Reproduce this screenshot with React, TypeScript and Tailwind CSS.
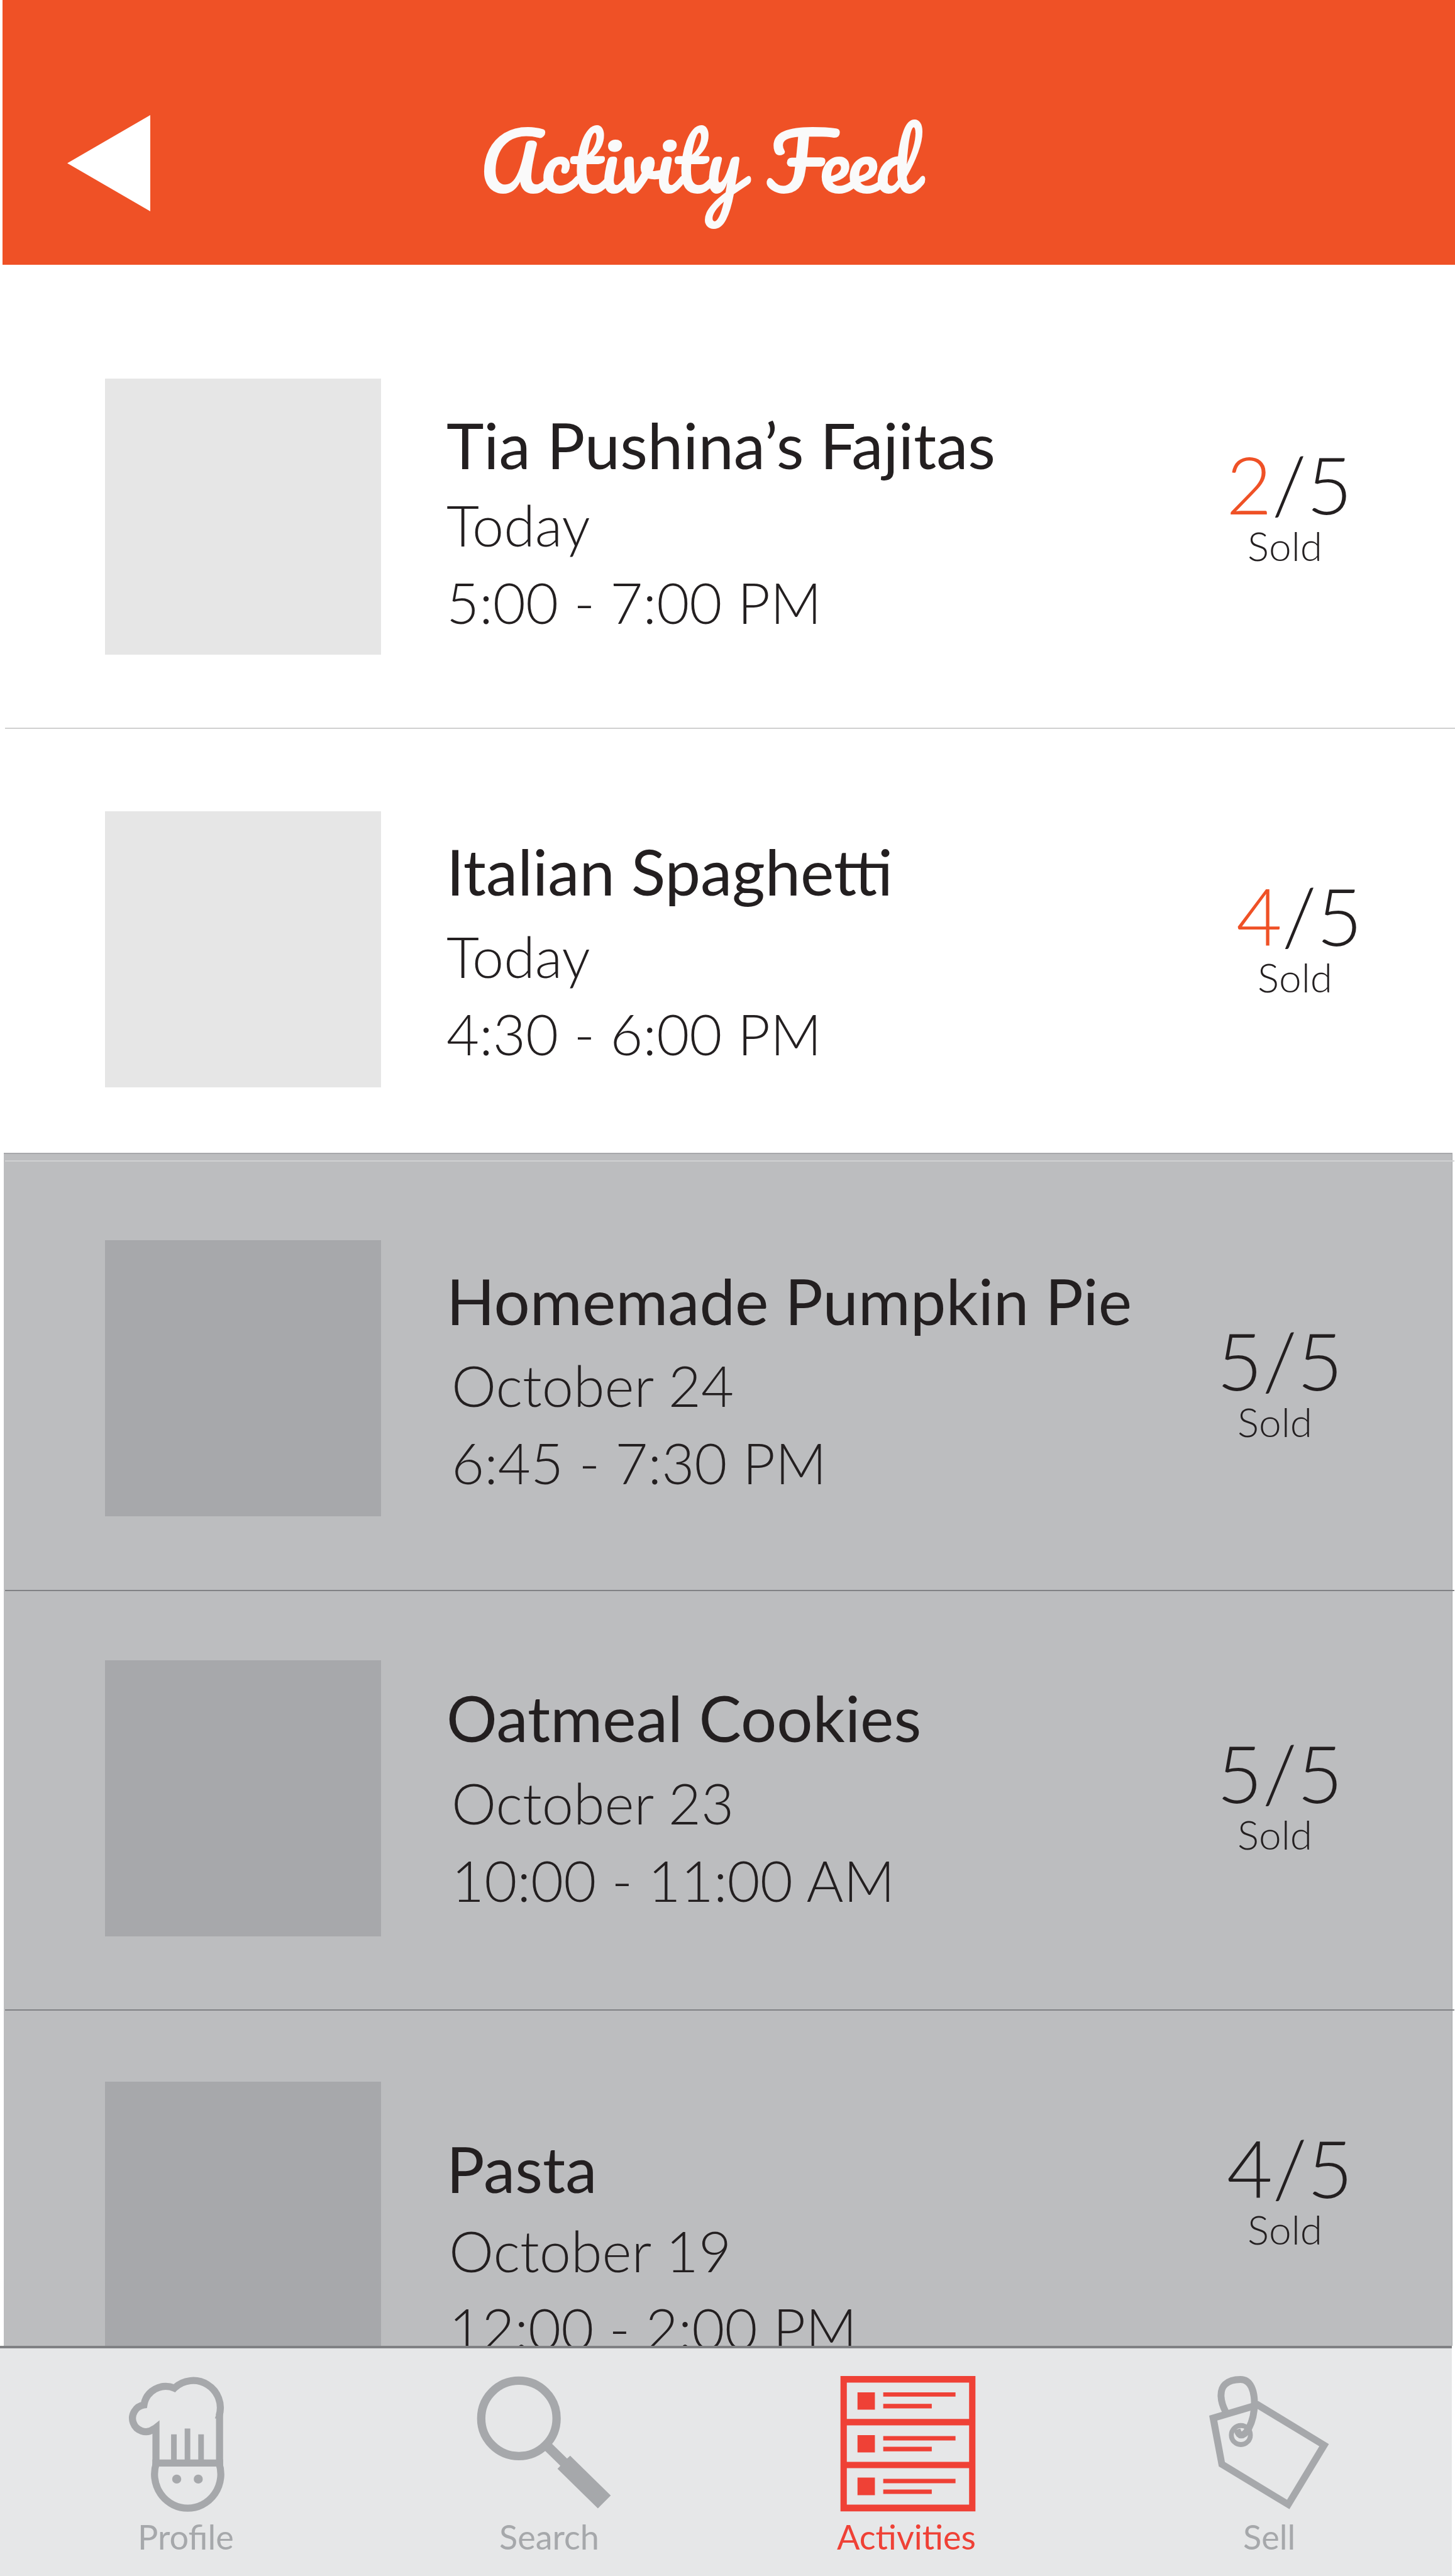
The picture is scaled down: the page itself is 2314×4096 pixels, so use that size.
import type { ReactNode } from "react";

type Activity = {
  title: string;
  date: string;
  time: string;
  sold: string;
  total: string;
  row: string;
  thumb: string;
  text: string;
  when: string;
  count: string;
  fraction: string;
  soldColor: string;
  label: string;
};

const upcoming: Activity[] = [
  {
    title: "Tia Pushina’s Fajitas",
    date: "Today",
    time: "5:00 - 7:00 PM",
    sold: "2",
    total: "5",
    row: "h-[736px]",
    thumb: "mt-[181px] bg-[#e6e6e6]",
    text: "pt-[225px]",
    when: "pt-1",
    count: "pt-[287px]",
    fraction: "pl-5",
    soldColor: "text-[#ef5126]",
    label: "pl-[54px]",
  },
  {
    title: "Italian Spaghetti",
    date: "Today",
    time: "4:30 - 6:00 PM",
    sold: "4",
    total: "5",
    row: "h-[674px]",
    thumb: "mt-[131px] bg-[#e6e6e6]",
    text: "pt-[165px]",
    when: "pt-3",
    count: "pt-[235px]",
    fraction: "pl-9",
    soldColor: "text-[#ef5126]",
    label: "pl-[70px]",
  },
];

const past: Activity[] = [
  {
    title: "Homemade Pumpkin Pie",
    date: "October 24",
    time: "6:45 - 7:30 PM",
    sold: "5",
    total: "5",
    row: "h-[681px]",
    thumb: "mt-[125px] bg-[#a7a8ab]",
    text: "pt-[160px]",
    when: "pt-[11px] pl-2",
    count: "pt-[254px]",
    fraction: "pl-[5px]",
    soldColor: "",
    label: "pl-[38px]",
  },
  {
    title: "Oatmeal Cookies",
    date: "October 23",
    time: "10:00 - 11:00 AM",
    sold: "5",
    total: "5",
    row: "h-[665px]",
    thumb: "mt-[110px] bg-[#a7a8ab]",
    text: "pt-[140px]",
    when: "pt-3 pl-2",
    count: "pt-[227px]",
    fraction: "pl-[5px]",
    soldColor: "",
    label: "pl-[38px]",
  },
  {
    title: "Pasta",
    date: "October 19",
    time: "12:00 - 2:00 PM",
    sold: "4",
    total: "5",
    row: "h-[534px]",
    thumb: "mt-[113px] bg-[#a7a8ab]",
    text: "pt-[190px]",
    when: "pt-[7px] pl-1",
    count: "pt-[188px]",
    fraction: "pl-[21px]",
    soldColor: "",
    label: "pl-[54px]",
  },
];

function ActivityRow({ a }: { a: Activity }) {
  return (
    <article className={`flex items-start overflow-hidden ${a.row}`}>
      <div className={`ml-[161px] size-[439px] shrink-0 ${a.thumb}`} />
      <div className={`ml-[104px] w-[1220px] shrink-0 whitespace-nowrap ${a.text}`}>
        <h2 className="text-[101px] leading-[123px] font-normal">{a.title}</h2>
        <div className={`text-[90px] leading-[123px] font-light ${a.when}`}>
          <p>{a.date}</p>
          <p>{a.time}</p>
        </div>
      </div>
      <div className={`whitespace-nowrap font-light ${a.count}`}>
        <p className={`text-[126px] leading-[124px] ${a.fraction}`}>
          <span className={a.soldColor}>{a.sold}</span>/{a.total}
        </p>
        <p className={`pt-1 text-[64px] leading-[64px] ${a.label}`}>Sold</p>
      </div>
    </article>
  );
}

function ProfileIcon() {
  return (
    <svg viewBox="0 60 780 840" className="h-[242px] w-[225px]" fill="currentColor">
      <g fill="none" stroke="currentColor" strokeWidth="39" strokeLinejoin="miter">
        <path d="M240 401A74 74 0 1 1 190 265A122 122 0 0 1 358 172A150 150 0 0 1 605 325" />
        <path d="M259 584A183 188 0 1 0 604 584" />
      </g>
      <path d="M226 385L242 377L276 350V605H237V422L226 424Z" />
      <path d="M588 320L627 310V605H588V339H582Z" />
      <path d="M237 566H627V605H237ZM340 427H371V570H340ZM415 395H446V570H415ZM490 427H521V570H490Z" />
      <circle cx="371" cy="674" r="25" />
      <circle cx="490" cy="674" r="25" />
    </svg>
  );
}

function SearchIcon() {
  return (
    <svg viewBox="0 0 840 840" className="size-[242px]" fill="currentColor">
      <circle cx="282" cy="279" r="208" fill="none" stroke="currentColor" strokeWidth="46" />
      <path d="M445 400L548 501L565 485L789 705L718 776L495 557L511 541L408 440Z" />
    </svg>
  );
}

function ActivitiesIcon() {
  return (
    <svg viewBox="0 0 900 840" className="h-[242px] w-[260px]" fill="currentColor">
      <path
        fillRule="evenodd"
        d="M74 45H819V792H74ZM109 82V282H784V82ZM109 318V519H784V318ZM109 554V755H784V554Z"
      />
      <path d="M168 135H264V231H168ZM168 371H264V467H168ZM168 606H264V703H168Z" />
      <path d="M310 135H709V159H310ZM310 377H709V401H310ZM310 613H709V637H310Z" />
      <path d="M310 199H578V224H310ZM310 436H578V461H310ZM310 672H578V696H310Z" />
    </svg>
  );
}

function SellIcon() {
  return (
    <svg viewBox="0 0 780 840" className="h-[242px] w-[225px]" fill="currentColor">
      <path
        fillRule="evenodd"
        d="M69 264L340 183L730 421L512 780L122 544ZM114 291L156 520L499 728L677 433L334 226Z"
      />
      <g fill="none" stroke="currentColor">
        <circle cx="244" cy="371" r="52.5" strokeWidth="27" />
        <path
          strokeWidth="38"
          d="M160 243C125 175 128 118 157 91C180 70 215 64 242 64C300 64 319 130 319 195C319 250 305 300 288 333C268 368 255 371 245 371C236 371 228 360 223 340"
        />
      </g>
      <path d="M242 333L262 336L248 350Z" fill="#e6e7e8" />
    </svg>
  );
}

function NavItem({
  icon,
  label,
  item,
  text,
}: {
  icon: ReactNode;
  label: string;
  item: string;
  text: string;
}) {
  return (
    <a className={`flex shrink-0 flex-col ${item}`}>
      {icon}
      <span className={`text-[54px] leading-[54px] whitespace-nowrap ${text}`}>{label}</span>
    </a>
  );
}

export default function App() {
  return (
    <div className="flex h-[4096px] w-[2314px] flex-col overflow-hidden bg-white font-['Lato',sans-serif] text-[#231f20]">
      <header className="ml-1 flex h-[421px] shrink-0 items-start bg-[#ef5126]">
        <svg viewBox="0 0 132 153" className="mt-[183px] ml-[103px] h-[153px] w-[132px]">
          <path d="M0 76.500L132 0V153Z" fill="#fff" />
        </svg>
        <h1 className="mt-48 ml-[524px] font-['Pacifico',cursive] text-[124px] leading-[124px] font-normal whitespace-nowrap text-[#fafafa]">
          <span className="tracking-[-0.1px]">Activity</span>{" "}
          <span className="ml-1.5 tracking-[-4px]">Feed</span>
        </h1>
      </header>

      <section className="ml-1.5 shrink-0">
        <ActivityRow a={upcoming[0]} />
        <div className="ml-0.5 h-0.5 bg-[#d0d0d0]" />
        <ActivityRow a={upcoming[1]} />
      </section>

      <section className="mr-1 ml-1.5 h-[1897px] shrink-0 border-t-2 border-r border-[#a7a8ab] bg-[#bcbdbf]">
        <div className="mt-2.5 -mr-1 ml-0.5 h-0.5 bg-[#d0d1d2]" />
        <ActivityRow a={past[0]} />
        <div className="-mr-1 ml-0.5 h-0.5 bg-[#808184]" />
        <ActivityRow a={past[1]} />
        <div className="-mr-1 ml-0.5 h-0.5 bg-[#808184]" />
        <ActivityRow a={past[2]} />
      </section>

      <nav className="mr-[5px] flex grow items-start border-t-4 border-[#808184] bg-[#e6e7e8] pt-[31px] text-[#a6a8ab]">
        <NavItem icon={<ProfileIcon />} label="Profile" item="ml-[174px] w-[225px]" text="pl-[45px]" />
        <NavItem icon={<SearchIcon />} label="Search" item="ml-[345px] w-[242px]" text="pl-[50px]" />
        <NavItem
          icon={<ActivitiesIcon />}
          label="Activities"
          item="ml-[329px] w-[260px] text-[#ef4136]"
          text="pl-4"
        />
        <NavItem icon={<SellIcon />} label="Sell" item="ml-[328px] w-[225px]" text="pl-[74px]" />
      </nav>
    </div>
  );
}
